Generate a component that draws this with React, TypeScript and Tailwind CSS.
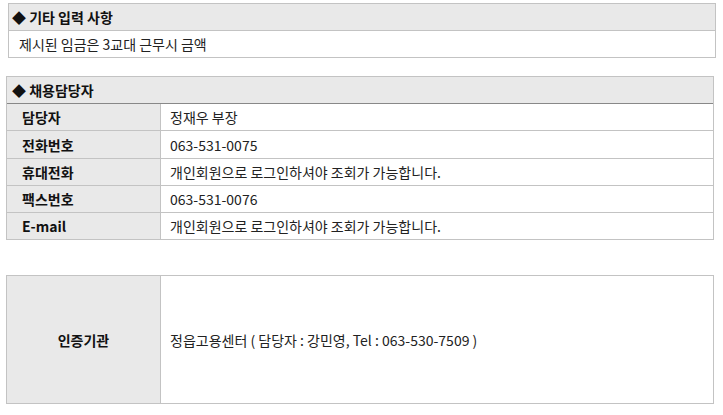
const contactRows = [
  { label: '담당자', value: '정재우 부장', h: 'h-[27px]' },
  { label: '전화번호', value: '063-531-0075', h: 'h-[28px]' },
  { label: '휴대전화', value: '개인회원으로 로그인하셔야 조회가 가능합니다.', h: 'h-[27px]' },
  { label: '팩스번호', value: '063-531-0076', h: 'h-[27px]' },
  { label: 'E-mail', value: '개인회원으로 로그인하셔야 조회가 가능합니다.', h: 'h-[26px]' }
];

const font = { fontFamily: '"Noto Sans CJK KR", "Noto Sans", sans-serif' };

export default function App() {
  return (
    <div className="w-[723px] h-[415px] bg-white text-[14px] text-[#222] leading-none" style={font}>
      {/* 기타 입력 사항 */}
      <div className="ml-[8px] mt-[3px] w-[708px] border border-[#c3c3c3]">
        <div className="h-[27px] bg-[#e9e9e9] border-b border-[#c3c3c3] flex items-center pl-[3px] font-bold text-[#111]">
          ◆ 기타 입력 사항
        </div>
        <div className="h-[26px] flex items-center pl-[10px]">제시된 임금은 3교대 근무시 금액</div>
      </div>

      {/* 채용담당자 */}
      <div className="ml-[6px] mt-[18px] w-[708px] border border-[#c3c3c3]">
        <div className="h-[27px] bg-[#e9e9e9] border-b border-[#888] flex items-center pl-[5px] font-bold text-[#111]">
          ◆ 채용담당자
        </div>
        {contactRows.map((row, i) => (
          <div
            key={row.label}
            className={`${row.h} flex ${i < contactRows.length - 1 ? 'border-b border-[#c3c3c3]' : ''}`}
          >
            <div className="w-[154px] shrink-0 bg-[#e9e9e9] border-r border-[#c3c3c3] flex items-center pl-[15px] font-bold text-[#111]">
              {row.label}
            </div>
            <div className="flex items-center pl-[9px]">{row.value}</div>
          </div>
        ))}
      </div>

      {/* 인증기관 */}
      <div className="ml-[6px] mt-[35px] w-[708px] h-[129px] border border-[#c3c3c3] flex">
        <div className="w-[154px] shrink-0 bg-[#e9e9e9] border-r border-[#c3c3c3] flex items-center justify-center font-bold text-[#111]">
          인증기관
        </div>
        <div className="flex items-center pl-[9px]">정읍고용센터 ( 담당자 : 강민영, Tel : 063-530-7509 )</div>
      </div>
    </div>
  );
}
